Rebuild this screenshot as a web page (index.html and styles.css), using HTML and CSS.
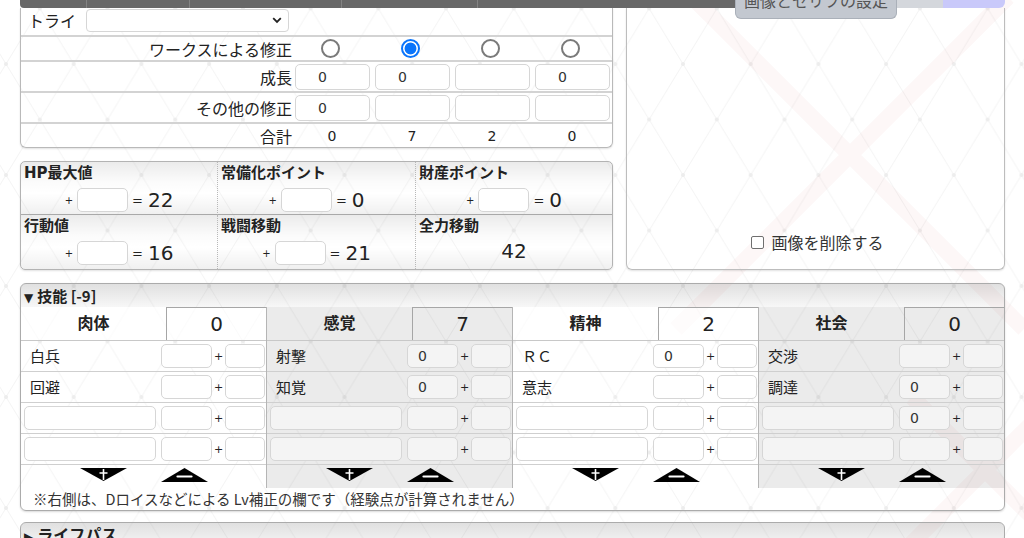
FILE: index.html
```html
<!DOCTYPE html>
<html lang="ja">
<head>
<meta charset="utf-8">
<title>キャラクターシート</title>
<link rel="stylesheet" href="styles.css">
</head>
<body>
<svg class="bg" width="1024" height="538" viewBox="0 0 1024 538" aria-hidden="true">
  <defs>
    <pattern id="lat" x="6" y="64" width="67.7" height="111" patternUnits="userSpaceOnUse">
      <path d="M0 0L67.7 111M67.7 0L0 111" stroke="#f5f5f5" stroke-width="1" fill="none"/>
      <circle cx="0" cy="0" r="2" fill="#ededed"/>
      <circle cx="67.7" cy="0" r="2" fill="#ededed"/>
      <circle cx="0" cy="111" r="2" fill="#ededed"/>
      <circle cx="67.7" cy="111" r="2" fill="#ededed"/>
      <circle cx="33.85" cy="55.5" r="2" fill="#ededed"/>
    </pattern>
  </defs>
  <rect width="1024" height="538" fill="url(#lat)"/>
  <g stroke="rgba(215,70,70,0.045)" stroke-width="16" fill="none">
    <path d="M692 -3L1024 329M1008 -3L676 329"/>
    <path d="M912 397L1030 515M1030 425L905 550"/>
  </g>
</svg>

<div class="page">
  <div class="topbar">
    <div class="darkbar">
      <span class="seg s1"></span><span class="seg s2"></span><span class="seg s3"></span><span class="seg s4"></span><span class="seg s5"></span>
    </div>
    <div class="tab tab-main">画像とセリフの設定</div>
    <div class="tab tab-gray"></div>
    <div class="tab tab-purple"></div>
  </div>

  <div class="main">
    <div class="leftcol">
      <div class="attr">
        <div class="row row-try">
          <span class="try-label">トライ</span>
          <div class="select">
            <svg width="10" height="7" viewBox="0 0 10 7"><path d="M1.2 1.2L5 5L8.8 1.2" stroke="#222" stroke-width="1.8" fill="none"/></svg>
          </div>
        </div>
        <div class="row row-works">
          <div class="lbl">ワークスによる修正</div>
          <div class="cell rc"><span class="radio"></span></div>
          <div class="cell rc"><span class="radio on"></span></div>
          <div class="cell rc"><span class="radio"></span></div>
          <div class="cell rc"><span class="radio"></span></div>
        </div>
        <div class="row row-inp">
          <div class="lbl">成長</div>
          <div class="cell"><input class="ai" type="text" value="0"></div>
          <div class="cell"><input class="ai" type="text" value="0"></div>
          <div class="cell"><input class="ai" type="text" value=""></div>
          <div class="cell"><input class="ai" type="text" value="0"></div>
        </div>
        <div class="row row-inp">
          <div class="lbl">その他の修正</div>
          <div class="cell"><input class="ai" type="text" value="0"></div>
          <div class="cell"><input class="ai" type="text" value=""></div>
          <div class="cell"><input class="ai" type="text" value=""></div>
          <div class="cell"><input class="ai" type="text" value=""></div>
        </div>
        <div class="row row-sum">
          <div class="lbl">合計</div>
          <div class="sum">0</div>
          <div class="sum">7</div>
          <div class="sum">2</div>
          <div class="sum">0</div>
        </div>
      </div>

      <div class="stats">
        <div class="stat top">
          <div class="sname-l">HP最大値</div>
          <div class="val"><span class="plus">+</span><input class="si" type="text" value=""><span class="eq">=</span><span class="num">22</span></div>
        </div>
        <div class="stat top">
          <div class="sname-l">常備化ポイント</div>
          <div class="val"><span class="plus">+</span><input class="si" type="text" value=""><span class="eq">=</span><span class="num">0</span></div>
        </div>
        <div class="stat top">
          <div class="sname-l">財産ポイント</div>
          <div class="val"><span class="plus">+</span><input class="si" type="text" value=""><span class="eq">=</span><span class="num">0</span></div>
        </div>
        <div class="stat">
          <div class="sname-l">行動値</div>
          <div class="val"><span class="plus">+</span><input class="si" type="text" value=""><span class="eq">=</span><span class="num">16</span></div>
        </div>
        <div class="stat">
          <div class="sname-l">戦闘移動</div>
          <div class="val"><span class="plus">+</span><input class="si" type="text" value=""><span class="eq">=</span><span class="num">21</span></div>
        </div>
        <div class="stat">
          <div class="sname-l">全力移動</div>
          <div class="val val-only"><span class="num">42</span></div>
        </div>
      </div>
    </div>

    <div class="portrait">
      <label class="del"><span class="cb"></span>画像を削除する</label>
    </div>
  </div>

  <section class="skills">
    <div class="sec-head"><span class="tri">▼</span>技能 [-9]</div>
    <div class="groups">
      <div class="group">
        <div class="ghead"><div class="gname">肉体</div><div class="gval">0</div></div>
        <div class="srow"><div class="sname">白兵</div><input class="i1" type="text" value=""><span class="splus">+</span><input class="i2" type="text" value=""></div>
        <div class="srow"><div class="sname">回避</div><input class="i1" type="text" value=""><span class="splus">+</span><input class="i2" type="text" value=""></div>
        <div class="srow"><div class="sname free"><input class="iname" type="text" value=""></div><input class="i1" type="text" value=""><span class="splus">+</span><input class="i2" type="text" value=""></div>
        <div class="srow"><div class="sname free"><input class="iname" type="text" value=""></div><input class="i1" type="text" value=""><span class="splus">+</span><input class="i2" type="text" value=""></div>
        <div class="arrows">
          <svg width="47" height="13" viewBox="0 0 47 13"><path d="M0 0H47L23.5 13Z" fill="#000"/><path d="M23.5 1V12M19.5 5H27.5" stroke="#fff" stroke-width="1.6"/></svg>
          <svg width="47" height="14" viewBox="0 0 47 14"><path d="M0 14H47L23.5 0Z" fill="#000"/><path d="M16.5 8.5H30.5" stroke="#fff" stroke-width="2.2" stroke-linecap="round"/></svg>
        </div>
      </div>
      <div class="group gray">
        <div class="ghead"><div class="gname">感覚</div><div class="gval">7</div></div>
        <div class="srow"><div class="sname">射撃</div><input class="i1" type="text" value="0"><span class="splus">+</span><input class="i2" type="text" value=""></div>
        <div class="srow"><div class="sname">知覚</div><input class="i1" type="text" value="0"><span class="splus">+</span><input class="i2" type="text" value=""></div>
        <div class="srow"><div class="sname free"><input class="iname" type="text" value=""></div><input class="i1" type="text" value=""><span class="splus">+</span><input class="i2" type="text" value=""></div>
        <div class="srow"><div class="sname free"><input class="iname" type="text" value=""></div><input class="i1" type="text" value=""><span class="splus">+</span><input class="i2" type="text" value=""></div>
        <div class="arrows">
          <svg width="47" height="13" viewBox="0 0 47 13"><path d="M0 0H47L23.5 13Z" fill="#000"/><path d="M23.5 1V12M19.5 5H27.5" stroke="#fff" stroke-width="1.6"/></svg>
          <svg width="47" height="14" viewBox="0 0 47 14"><path d="M0 14H47L23.5 0Z" fill="#000"/><path d="M16.5 8.5H30.5" stroke="#fff" stroke-width="2.2" stroke-linecap="round"/></svg>
        </div>
      </div>
      <div class="group">
        <div class="ghead"><div class="gname">精神</div><div class="gval">2</div></div>
        <div class="srow"><div class="sname">ＲＣ</div><input class="i1" type="text" value="0"><span class="splus">+</span><input class="i2" type="text" value=""></div>
        <div class="srow"><div class="sname">意志</div><input class="i1" type="text" value=""><span class="splus">+</span><input class="i2" type="text" value=""></div>
        <div class="srow"><div class="sname free"><input class="iname" type="text" value=""></div><input class="i1" type="text" value=""><span class="splus">+</span><input class="i2" type="text" value=""></div>
        <div class="srow"><div class="sname free"><input class="iname" type="text" value=""></div><input class="i1" type="text" value=""><span class="splus">+</span><input class="i2" type="text" value=""></div>
        <div class="arrows">
          <svg width="47" height="13" viewBox="0 0 47 13"><path d="M0 0H47L23.5 13Z" fill="#000"/><path d="M23.5 1V12M19.5 5H27.5" stroke="#fff" stroke-width="1.6"/></svg>
          <svg width="47" height="14" viewBox="0 0 47 14"><path d="M0 14H47L23.5 0Z" fill="#000"/><path d="M16.5 8.5H30.5" stroke="#fff" stroke-width="2.2" stroke-linecap="round"/></svg>
        </div>
      </div>
      <div class="group gray">
        <div class="ghead"><div class="gname">社会</div><div class="gval">0</div></div>
        <div class="srow"><div class="sname">交渉</div><input class="i1" type="text" value=""><span class="splus">+</span><input class="i2" type="text" value=""></div>
        <div class="srow"><div class="sname">調達</div><input class="i1" type="text" value="0"><span class="splus">+</span><input class="i2" type="text" value=""></div>
        <div class="srow"><div class="sname free"><input class="iname" type="text" value=""></div><input class="i1" type="text" value="0"><span class="splus">+</span><input class="i2" type="text" value=""></div>
        <div class="srow"><div class="sname free"><input class="iname" type="text" value=""></div><input class="i1" type="text" value=""><span class="splus">+</span><input class="i2" type="text" value=""></div>
        <div class="arrows">
          <svg width="47" height="13" viewBox="0 0 47 13"><path d="M0 0H47L23.5 13Z" fill="#000"/><path d="M23.5 1V12M19.5 5H27.5" stroke="#fff" stroke-width="1.6"/></svg>
          <svg width="47" height="14" viewBox="0 0 47 14"><path d="M0 14H47L23.5 0Z" fill="#000"/><path d="M16.5 8.5H30.5" stroke="#fff" stroke-width="2.2" stroke-linecap="round"/></svg>
        </div>
      </div>
    </div>
    <div class="note">※右側は、Dロイスなどによる Lv補正の欄です（経験点が計算されません）</div>
  </section>

  <section class="lifepath">
    <div class="sec-head lp"><span class="tri">▶</span>ライフパス</div>
  </section>
</div>
</body>
</html>
```

FILE: styles.css
```css
* { box-sizing: border-box; }

html, body {
  margin: 0;
  height: 538px;
  overflow: hidden;
}

body {
  background: #fff;
  font-family: "DejaVu Sans", "Noto Sans CJK JP", sans-serif;
  color: #222;
  font-size: 15px;
  position: relative;
}

.bg {
  position: absolute;
  left: 0;
  top: 0;
  z-index: 0;
}

.page {
  position: relative;
  z-index: 1;
  padding: 0 19px 0 20px;
}

/* ---------- top bar ---------- */
.topbar {
  display: flex;
  align-items: flex-start;
  height: 8px;
  position: relative;
  z-index: 3;
}

.darkbar {
  width: 715px;
  height: 8px;
  background: #686868;
  border-radius: 0 0 0 4px;
  display: flex;
}

.seg {
  height: 100%;
  border-right: 1px solid #838383;
}
.s1 { width: 67px; }
.s2 { width: 103px; }
.s3 { width: 152px; }
.s4 { width: 136px; }
.s5 { flex: 1; border-right: 0; }

.tab-main {
  width: 162px;
  height: 19px;
  background: #c3c8d0;
  border: 1px solid #aab0b9;
  border-top: 0;
  border-radius: 0 0 6px 6px;
  text-align: center;
  font-family: "Noto Sans CJK JP", sans-serif;
  font-size: 16px;
  line-height: 1px;
  color: #555;
  overflow: hidden;
}

.tab-gray {
  width: 46px;
  height: 8px;
  background: #d4d7dc;
}

.tab-purple {
  width: 62px;
  height: 8px;
  background: #c9c9fa;
  border-radius: 0 0 6px 0;
}

/* ---------- main area ---------- */
.main {
  display: grid;
  grid-template-columns: 593px 379px;
  column-gap: 13px;
}

.leftcol {
  display: flex;
  flex-direction: column;
  gap: 13px;
}

.attr {
  border: 1px solid #b9b9b9;
  border-top: 0;
  border-radius: 0 0 6px 6px;
  box-shadow: 0 1px 2px rgba(0, 0, 0, 0.12);
}

.row {
  display: grid;
  grid-template-columns: 271px repeat(4, 80px);
  align-items: center;
  border-bottom: 2px solid #d3d3d3;
}
.row:last-child { border-bottom: 0; }

.row-try {
  display: flex;
  height: 29px;
  padding-left: 7px;
}

.try-label {
  width: 58px;
  font-family: "Noto Sans CJK JP", sans-serif;
  font-size: 16px;
  line-height: 22px;
  padding-bottom: 3px;
}

.select {
  width: 203px;
  height: 23px;
  border: 1px solid #d6d6d6;
  border-radius: 4px;
  background: #fff;
  display: flex;
  justify-content: flex-end;
  align-items: center;
  padding-right: 6px;
  margin-bottom: 2px;
}

.row-works { height: 25px; }
.row-inp { height: 31px; }
.row-sum { height: 23px; }

.lbl {
  text-align: right;
  font-family: "Noto Sans CJK JP", sans-serif;
  font-size: 16px;
  line-height: 20px;
}

.cell {
  display: flex;
  padding-left: 3px;
}

.cell.rc {
  justify-content: center;
  padding-left: 0;
  padding-right: 3px;
}

.radio {
  width: 19px;
  height: 19px;
  border: 2px solid #7a7a7a;
  border-radius: 50%;
  background: #fff;
}

.radio.on {
  border-color: #0b75fb;
  background: radial-gradient(circle, #0b75fb 0 5.5px, #fff 6.3px);
}

input {
  border: 1px solid #d6d6d6;
  border-radius: 5px;
  background: #fff;
  font-family: "DejaVu Sans", sans-serif;
  color: #333;
  text-align: center;
  padding: 0 20px 0 0;
  margin: 0;
  outline: none;
}

.ai {
  width: 75px;
  height: 26px;
  font-size: 14px;
}

.sum {
  text-align: center;
  font-size: 14px;
  line-height: 20px;
}

/* ---------- stats ---------- */
.stats {
  border: 1px solid #b3b3b3;
  border-radius: 5px;
  display: grid;
  grid-template-columns: 196px 198px 197px;
  overflow: hidden;
  box-shadow: 0 1px 2px rgba(0, 0, 0, 0.12);
}

.stat {
  height: 54px;
  border-left: 1px dotted #b8b8b8;
  background: linear-gradient(to bottom, rgba(0,0,0,0.08) 0%, rgba(0,0,0,0.015) 38%, rgba(0,0,0,0) 60%, rgba(0,0,0,0.06) 100%);
}
.stat:nth-child(3n+1) { border-left: 0; }
.stat.top {
  height: 53px;
  border-bottom: 1px solid #a9a9a9;
}

.sname-l {
  font-weight: bold;
  font-size: 15px;
  line-height: 20px;
  padding: 1px 0 0 3px;
}

.val {
  display: flex;
  justify-content: center;
  align-items: center;
  height: 24px;
  margin-top: 5px;
}

.val-only { margin-top: 3px; }

.plus {
  font-size: 10px;
  margin-right: 4px;
}

.si {
  width: 51px;
  height: 24px;
}

.eq {
  font-size: 13px;
  margin: 0 5px 0 4px;
}

.num {
  font-size: 20px;
  line-height: 24px;
}

/* ---------- portrait ---------- */
.portrait {
  height: 262px;
  border: 1px solid #bdbdbd;
  border-top: 0;
  border-radius: 0 0 6px 6px;
  box-shadow: 0 1px 2px rgba(0, 0, 0, 0.12);
  display: flex;
  align-items: flex-end;
  justify-content: center;
  padding: 0 0 17px 4px;
}

.del {
  display: flex;
  align-items: center;
  gap: 7px;
  font-family: "Noto Sans CJK JP", sans-serif;
  font-size: 16px;
  line-height: 20px;
  color: #333;
}

.cb {
  width: 13px;
  height: 13px;
  border: 1.5px solid #6f6f6f;
  border-radius: 2px;
  background: #fff;
}

/* ---------- skills ---------- */
.skills {
  margin-top: 13px;
  border: 1px solid #ababab;
  border-radius: 6px;
  overflow: hidden;
  box-shadow: 0 1px 2px rgba(0, 0, 0, 0.15);
}

.sec-head {
  height: 23px;
  background: linear-gradient(to bottom, rgba(0,0,0,0.12), rgba(0,0,0,0.03));
  font-weight: bold;
  font-size: 15px;
  line-height: 23px;
  padding-left: 3px;
  font-family: "Noto Sans CJK JP", sans-serif;
}

.tri {
  font-family: "DejaVu Sans", sans-serif;
  font-size: 12px;
  margin-right: 4px;
}

.groups {
  display: grid;
  grid-template-columns: 245px 246px 246px 246px;
}

.group { border-left: 1px solid #b5b5b5; }
.group:first-child { border-left: 0; }
.group.gray { background: rgba(0, 0, 0, 0.08); }

.ghead {
  display: flex;
  height: 34px;
  border-bottom: 1px solid #c8c8c8;
}

.gname {
  width: 145px;
  text-align: center;
  font-family: "Noto Sans CJK JP", sans-serif;
  font-weight: bold;
  font-size: 16px;
  line-height: 30px;
}

.gval {
  flex: 1;
  border-left: 1px solid #a6a6a6;
  border-top: 1px solid #a6a6a6;
  text-align: center;
  font-size: 20px;
  line-height: 32px;
}

.group:not(.gray) .gval,
.group:not(.gray) .gname { background: rgba(255, 255, 255, 0.6); }

.srow {
  display: flex;
  align-items: center;
  height: 31px;
  border-bottom: 1px solid #cfcfcf;
}

.sname {
  width: 140px;
  padding-left: 9px;
  font-family: "Noto Sans CJK JP", sans-serif;
  font-size: 15px;
  line-height: 20px;
}

.sname.free { padding-left: 3px; }

.iname {
  width: 132px;
  height: 24px;
}

.i1 {
  width: 51px;
  height: 24px;
  font-size: 14px;
}

.splus {
  width: 13px;
  text-align: center;
  font-size: 11px;
}

.i2 {
  width: 40px;
  height: 24px;
}

.gray input { background: #f4f4f4; }

.arrows {
  display: flex;
  justify-content: center;
  gap: 34px;
  height: 23px;
  padding-top: 3px;
}

.note {
  height: 22px;
  padding: 1px 0 0 12px;
  font-family: "Noto Sans CJK JP", sans-serif;
  font-size: 14.5px;
  line-height: 20px;
  color: #333;
}

/* ---------- life path ---------- */
.lifepath {
  margin-top: 11px;
  border: 1px solid #ababab;
  border-radius: 6px;
  overflow: hidden;
  height: 40px;
}

.sec-head.lp {
  height: 40px;
  font-size: 16px;
  line-height: 22px;
  background: linear-gradient(to bottom, rgba(0,0,0,0.12), rgba(0,0,0,0.03) 60%);
}
```
